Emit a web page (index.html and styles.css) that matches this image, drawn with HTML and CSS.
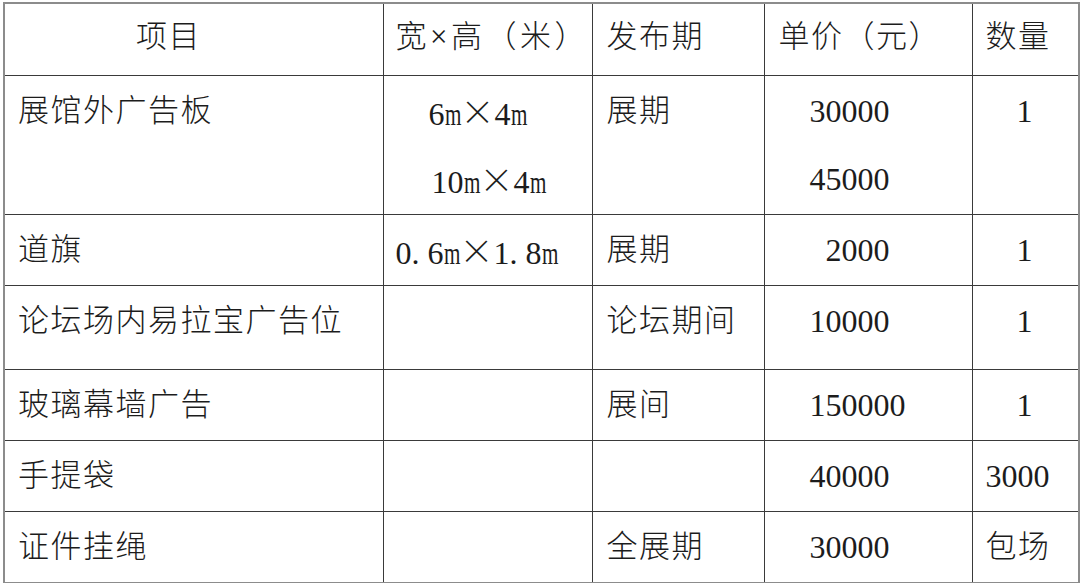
FILE: index.html
```html
<!DOCTYPE html>
<html lang="zh-CN">
<head>
<meta charset="utf-8">
<title>广告报价</title>
<link rel="stylesheet" href="styles.css">
</head>
<body>
<table class="price">
  <colgroup>
    <col class="c1"><col class="c2"><col class="c3"><col class="c4"><col class="c5">
  </colgroup>
  <tr class="head">
    <td class="item-h"><div class="ln">项目</div></td>
    <td class="size size-h"><div class="ln">宽×高（米）</div></td>
    <td class="period"><div class="ln">发布期</div></td>
    <td class="price-h"><div class="ln">单价（元）</div></td>
    <td class="qty"><div class="ln">数量</div></td>
  </tr>
  <tr class="r1">
    <td class="item"><div class="ln">展馆外广告板</div></td>
    <td class="size"><div class="ln in1">6<span class="m">m</span><span class="x">×</span>4<span class="m">m</span></div><div class="ln in2">10<span class="m">m</span><span class="x">×</span>4<span class="m">m</span></div></td>
    <td class="period"><div class="ln">展期</div></td>
    <td class="num"><div class="ln">30000</div><div class="ln">45000</div></td>
    <td class="qty"><div class="ln one">1</div></td>
  </tr>
  <tr class="r2">
    <td class="item"><div class="ln">道旗</div></td>
    <td class="size"><div class="ln">0. 6<span class="m">m</span><span class="x">×</span>1. 8<span class="m">m</span></div></td>
    <td class="period"><div class="ln">展期</div></td>
    <td class="num"><div class="ln short">2000</div></td>
    <td class="qty"><div class="ln one">1</div></td>
  </tr>
  <tr class="r3">
    <td class="item"><div class="ln">论坛场内易拉宝广告位</div></td>
    <td class="size"></td>
    <td class="period"><div class="ln">论坛期间</div></td>
    <td class="num"><div class="ln">10000</div></td>
    <td class="qty"><div class="ln one">1</div></td>
  </tr>
  <tr class="r4">
    <td class="item"><div class="ln">玻璃幕墙广告</div></td>
    <td class="size"></td>
    <td class="period"><div class="ln">展间</div></td>
    <td class="num"><div class="ln">150000</div></td>
    <td class="qty"><div class="ln one">1</div></td>
  </tr>
  <tr class="r5">
    <td class="item"><div class="ln">手提袋</div></td>
    <td class="size"></td>
    <td class="period"></td>
    <td class="num"><div class="ln">40000</div></td>
    <td class="qty"><div class="ln digits">3000</div></td>
  </tr>
  <tr class="r6">
    <td class="item"><div class="ln">证件挂绳</div></td>
    <td class="size"></td>
    <td class="period"><div class="ln">全展期</div></td>
    <td class="num"><div class="ln">30000</div></td>
    <td class="qty"><div class="ln">包场</div></td>
  </tr>
</table>
</body>
</html>
```

FILE: styles.css
```css
html, body {
  margin: 0;
  padding: 0;
  background: #ffffff;
}

body {
  padding: 2px 0 0 3px;
}

.price {
  border-collapse: collapse;
  table-layout: fixed;
  width: 1075px;
  border: 2px solid #8c8c8c;
  font-family: "Liberation Serif", "Noto Sans CJK SC", serif;
  font-size: 31px;
  color: #1c1c1c;
}

.c1 { width: 379px; }
.c2 { width: 209px; }
.c3 { width: 172px; }
.c4 { width: 208px; }
.c5 { width: 107px; }

.price td {
  border: 1px solid #3a3a3a;
  padding: 0;
  vertical-align: top;
  white-space: nowrap;
  font-weight: 300;
  letter-spacing: 1.5px;
}

.ln {
  height: 70px;
  line-height: 70px;
  overflow: visible;
}

.head .ln {
  height: 66px;
  line-height: 66px;
}

.head { height: 72px; }
.r1 { height: 139px; }
.r2 { height: 71px; }
.r3 { height: 84px; }
.r4 { height: 70px; }
.r5 { height: 70px; }
.r6 { height: 70px; }

.r1 .ln + .ln { margin-top: -2px; }

.price td.item { padding-left: 13px; }
.price td.item-h { padding-left: 131px; }
.price td.size { padding-left: 12px; letter-spacing: 0; font-size: 32px; }
.price td.size-h { letter-spacing: 3.5px; font-size: 31px; }
.price td.period { padding-left: 14px; }
.price td.price-h { padding-left: 14px; }
.price td.num { padding-left: 45px; letter-spacing: 0; font-size: 32px; }
.price td.qty { padding-left: 13px; }

.in1 { padding-left: 33px; }
.in2 { padding-left: 36px; }

.m {
  display: inline-block;
  width: 16px;
  transform: scaleX(0.66);
  transform-origin: left center;
}

.x {
  font-family: "Noto Sans CJK SC", sans-serif;
  font-weight: 300;
  display: inline-block;
  width: 34px;
  text-align: center;
  font-size: 34px;
  letter-spacing: 0;
}

.short { padding-left: 16px; }
.one { padding-left: 31px; font-size: 32px; }
.digits { font-size: 32px; letter-spacing: 0; }
```
